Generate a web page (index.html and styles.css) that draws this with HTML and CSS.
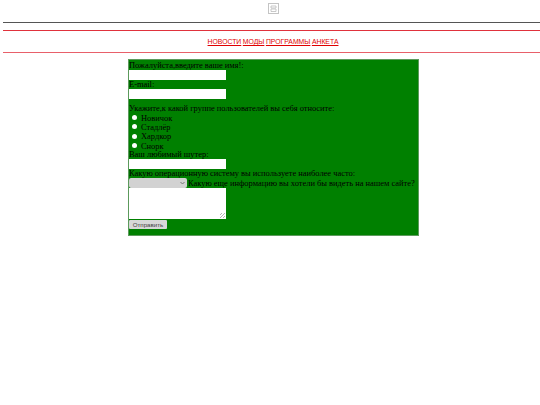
FILE: index.html
```html
<!DOCTYPE html>
<html lang="ru">
<head>
<meta charset="utf-8">
<title>Анкета</title>
<link rel="stylesheet" href="styles.css">
</head>
<body>
<header class="top">
  <div class="logo">
    <svg width="11" height="11" viewBox="0 0 11 11" aria-hidden="true">
      <rect x="0.5" y="0.5" width="10" height="10" fill="#fff" stroke="#c4c4c4"/>
      <path d="M3 3h5v2H3zM3 6h5v2.5H3z" fill="none" stroke="#bbb" stroke-width="0.8"/>
    </svg>
  </div>
  <hr class="rule rule-dark">
  <hr class="rule rule-red">
  <nav class="nav">
    <a href="#">НОВОСТИ</a> <a href="#">МОДЫ</a> <a href="#">ПРОГРАММЫ</a> <a href="#">АНКЕТА</a>
  </nav>
  <hr class="rule rule-red rule-low">
</header>
<main class="wrap">
  <form class="survey">
    <div class="line">Пожалуйста,введите ваше имя!:</div>
    <input class="field" type="text">
    <div class="line">E-mail:</div>
    <input class="field" type="text">
    <div class="line line-gap">Укажите,к какой группе пользователей вы себя относите:</div>
    <label class="choice"><input type="radio" name="g"><span>Новичок</span></label>
    <label class="choice"><input type="radio" name="g"><span>Стадлёр</span></label>
    <label class="choice"><input type="radio" name="g"><span>Хардкор</span></label>
    <label class="choice"><input type="radio" name="g"><span>Снорк</span></label>
    <div class="line">Ваш любимый шутер:</div>
    <input class="field" type="text">
    <div class="line">Какую операционную систему вы используете наиболее часто:</div>
    <div class="row">
      <div class="select"><svg width="5" height="4" viewBox="0 0 5 4" aria-hidden="true"><path d="M.5 1l2 2 2-2" fill="none" stroke="#777"/></svg></div>
      <span class="after">Какую еще информацию вы хотели бы видеть на нашем сайте?</span>
    </div>
    <textarea class="area"></textarea>
    <button class="send" type="button">Отправить</button>
  </form>
</main>
</body>
</html>
```

FILE: styles.css
```css
* { box-sizing: border-box; }
html, body { margin: 0; padding: 0; background: #fff; }
body {
  height: 405px;
  overflow: hidden;
  padding: 0 0 0 3px;
  font-family: "Liberation Serif", "Times New Roman", serif;
  font-size: 8.44px;
  color: #000;
}
.logo { height: 22px; padding: 3px 0 0 4px; display: flex; justify-content: center; }
.logo svg { display: block; }
.rule { height: 1px; margin: 0; border: 0; }
.rule-dark { background: #555; }
.rule-red { background: #e0323c; margin-top: 7px; }
.rule-low { margin-top: 0; background: #e8606a; }
.nav {
  height: 21px;
  display: flex;
  gap: 1.5px;
  justify-content: center;
  align-items: center;
  font-family: "Liberation Sans", Arial, sans-serif;
  font-size: 6.85px;
  padding-left: 3px;
}
.nav a { color: #e00000; text-decoration: underline; }
.wrap { display: flex; padding: 6px 0 0 125px; }
.survey {
  width: 291px;
  height: 177px;
  background: #008000;
  border: 1px solid #5c9a5c;
  padding-top: 1px;
  display: flex;
  flex-direction: column;
  align-items: flex-start;
}
.line { height: 9px; line-height: 9px; white-space: nowrap; }
.line-gap { margin-top: 5px; }
.field {
  width: 97px;
  height: 10px;
  border: 0;
  padding: 0;
  background: #fff;
  display: block;
}
.choice { display: flex; align-items: center; height: 9.3px; padding-left: 3px; }
.choice input {
  appearance: none;
  width: 5px;
  height: 5px;
  margin: 0 4px 0 0;
  background: #fff;
  border-radius: 50%;
}
.row { display: flex; align-items: center; height: 10px; }
.select {
  width: 58px;
  height: 10px;
  background: #d2d2d2;
  border-radius: 2px;
  display: flex;
  align-items: center;
  justify-content: flex-end;
  padding-right: 2px;
}
.after { white-space: nowrap; margin-left: 1px; }
.area {
  display: block;
  width: 97px;
  height: 31px;
  border: 0;
  padding: 0;
  resize: none;
  background: repeating-linear-gradient(135deg, #fff 0 1px, #b5b5b5 1px 2px) right 1px bottom 1px / 5px 5px no-repeat, #fff;
}
.send {
  margin-top: 1px;
  width: 38px;
  height: 9px;
  padding: 0;
  border: 0;
  border-radius: 1px;
  background: #d8d8d8;
  color: #444;
  font-family: "Liberation Sans", Arial, sans-serif;
  font-size: 6.2px;
  line-height: 9px;
}
```
